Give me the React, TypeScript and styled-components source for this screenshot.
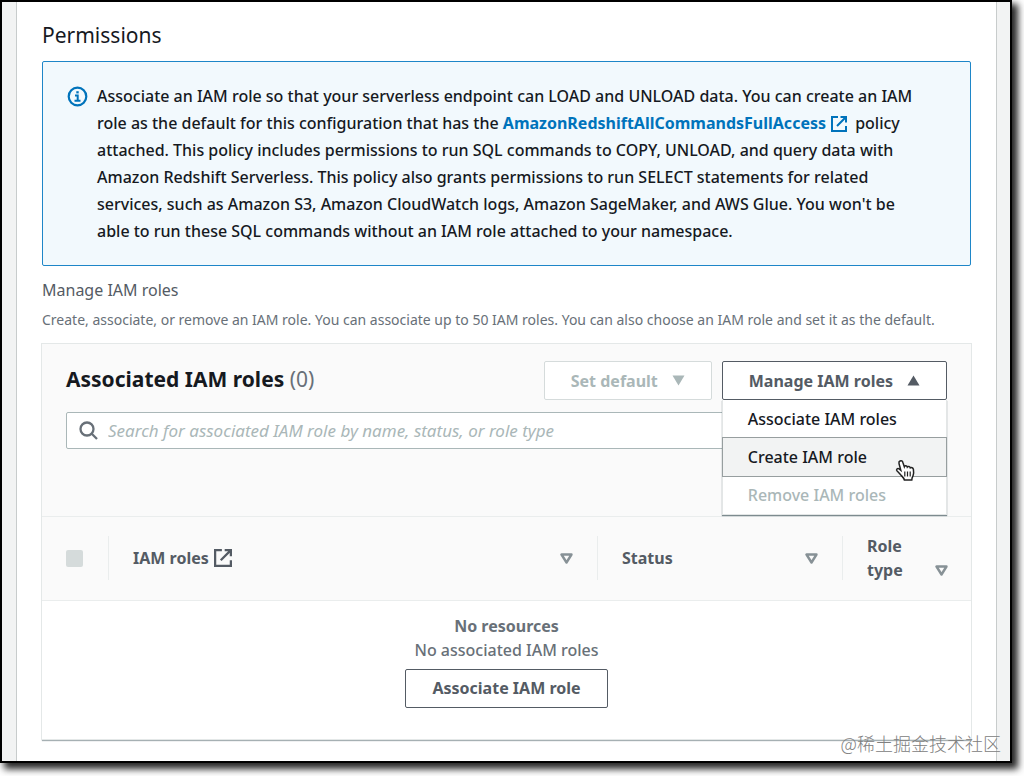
import React from "react";
import styled, { createGlobalStyle, css } from "styled-components";

const GlobalStyle = createGlobalStyle`
  *, *::before, *::after { box-sizing: border-box; }
  body {
    margin: 0;
    background: #fff;
    color: #16191f;
    font-family: "Noto Sans", "Open Sans", sans-serif;
    font-size: 16px;
    font-weight: 500;
    line-height: 24px;
  }
  button, input { font: inherit; }
  h2, h3, p { margin: 0; }
`;

const Frame = styled.div`
  position: relative;
  margin: 0 12px 13px 0;
  padding: 0 13px 0 14px;
  border: 2px solid #000;
  background: #f2f3f3;
  box-shadow: 5px 5px 7px 1px rgba(0, 0, 0, 0.85);
`;

const Panel = styled.main`
  padding: 18px 25px 22px;
  border: solid #c8cccc;
  border-width: 0 1px;
  background: #fff;
`;

const Title = styled.h2`
  margin-bottom: 11px;
  font-size: 21px;
  font-weight: 400;
  line-height: 30px;
`;

const Alert = styled.section`
  display: flex;
  gap: 9px;
  padding: 21px 42px 20px 24px;
  border: 1px solid #1e86c8;
  border-radius: 2px;
  background: #f2f9fd;
  line-height: 27px;

  > svg {
    flex: none;
    margin-top: 3px;
  }
`;

const PolicyLink = styled.a`
  color: #0073bb;
  font-weight: 700;
  text-decoration: none;

  svg {
    margin: 0 4px 0 5px;
    vertical-align: -3px;
  }
`;

const FieldLabel = styled.p`
  margin-top: 12px;
  color: #545b64;
  font-weight: 400;
`;

const FieldHint = styled.p`
  margin-top: 6px;
  color: #687078;
  font-size: 14px;
  font-weight: 400;
`;

const Card = styled.section`
  margin-top: 12px;
  box-shadow: 0 0 0 1px #e4e8e8, 0 2px 1px rgba(0, 28, 36, 0.35);
`;

const CardHeader = styled.header`
  padding: 17px 24px 67px;
  background: #fafafa;
  border-bottom: 1px solid #eaeded;
`;

const HeaderRow = styled.div`
  display: flex;
  align-items: flex-start;
  justify-content: space-between;
  margin-bottom: 12px;
`;

const CardTitle = styled.h3`
  font-size: 21px;
  font-weight: 700;
  line-height: 36px;
`;

const Count = styled.span`
  color: #687078;
  font-weight: 400;
`;

const Actions = styled.div`
  display: flex;
  gap: 10px;
`;

const Button = styled.button`
  display: inline-flex;
  align-items: center;
  justify-content: center;
  gap: 14px;
  height: 39px;
  padding: 0 26px;
  border: 1px solid #545b64;
  border-radius: 2px;
  background: #fff;
  color: #545b64;
  font-weight: 700;
  white-space: nowrap;

  &:disabled {
    border-color: #d5dbdb;
    color: #aab7b8;
  }
`;

const MenuAnchor = styled.div`
  position: relative;
`;

const Menu = styled.ul`
  position: absolute;
  top: 100%;
  left: 0;
  right: 0;
  z-index: 1;
  margin: 0;
  padding: 0;
  list-style: none;
  background: #fff;
  border: 1px solid #e3e6e6;
  border-top: 0;
  box-shadow: 0 1px 1px rgba(0, 28, 36, 0.5);
`;

const MenuItem = styled.button<{ $active?: boolean }>`
  display: block;
  width: 100%;
  height: 38px;
  padding: 0 25px;
  border: 0;
  background: none;
  color: #16191f;
  text-align: left;
  white-space: nowrap;

  &:disabled { color: #aab7b8; }

  ${(p) =>
    p.$active &&
    css`
      background: #f2f3f3;
      box-shadow: 0 0 0 1px #979e9f;
    `}
`;

const Pointer = styled.svg`
  position: absolute;
  right: 30px;
  bottom: 32px;
  z-index: 2;
`;

const Search = styled.label`
  display: flex;
  align-items: center;
  gap: 9px;
  width: 78%;
  height: 37px;
  padding: 0 11px;
  border: 1px solid #aab7b8;
  border-radius: 2px;
  background: #fff;
`;

const SearchInput = styled.input`
  flex: 1;
  min-width: 0;
  padding: 0;
  border: 0;
  outline: 0;
  background: none;

  &::placeholder {
    color: #aab7b8;
    font-size: 17px;
    font-weight: 400;
    font-style: italic;
    opacity: 1;
  }
`;

const Table = styled.table`
  width: 100%;
  border-collapse: collapse;
  table-layout: fixed;
`;

const SelectCol = styled.col` width: 67px; `;
const StatusCol = styled.col` width: 245px; `;
const TypeCol = styled.col` width: 128px; `;

const HeadCell = styled.th`
  height: 83px;
  padding: 17px 0;
  border-bottom: 1px solid #eaeded;
  background: #fafafa;
  color: #545b64;
  text-align: left;
`;

const HeadInner = styled.div<{ $last?: boolean }>`
  display: flex;
  align-items: ${(p) => (p.$last ? "flex-end" : "center")};
  justify-content: space-between;
  min-height: 44px;
  padding: 0 ${(p) => (p.$last ? 23 : 24)}px 0 24px;
  border-right: ${(p) => (p.$last ? "0" : "1px solid #eaeded")};

  > svg { margin-bottom: ${(p) => (p.$last ? 6 : 0)}px; }
`;

const HeadLink = styled.a`
  display: inline-flex;
  align-items: center;
  gap: 5px;
  color: inherit;
  text-decoration: none;
`;

const Tick = styled.input`
  appearance: none;
  width: 17px;
  height: 17px;
  margin: 0;
  border-radius: 2px;
  background: #d5dbdb;
`;

const EmptyCell = styled.td`
  padding: 13px 0 31px;
  color: #687078;
  text-align: center;

  button { margin-top: 7px; }
`;

const Watermark = styled.span`
  position: absolute;
  right: 9px;
  bottom: 4px;
  z-index: 3;
  color: #808080;
  font-family: "Noto Sans CJK SC", sans-serif;
  font-size: 18px;
  font-weight: 300;
  line-height: 28px;
`;

const External = ({ size = 17 }: { size?: number }) => (
  <svg width={size} height={size} viewBox="0 0 16 16" fill="none" stroke="currentColor" strokeWidth="2" aria-hidden="true">
    <path d="M7 1H1v14h14V10M9.500 1H15v5.500M15 1 6 10" />
  </svg>
);

const Caret = ({ up }: { up?: boolean }) => (
  <svg width="13" height="11" viewBox="0 0 13 11" fill="currentColor" aria-hidden="true">
    <path d={up ? "M6.500 0.500 12.500 10.500H0.500Z" : "M0.500 0.500H12.500L6.500 10.500Z"} />
  </svg>
);

const Sort = () => (
  <svg width="13" height="11" viewBox="0 0 13 11" fill="none" stroke="#879196" strokeWidth="2.400" strokeLinejoin="round" aria-hidden="true">
    <path d="M1.500 1.500h10l-5 8z" />
  </svg>
);

export default function App() {
  return (
    <>
      <GlobalStyle />
      <Frame>
        <Panel>
          <Title>Permissions</Title>
          <Alert>
            <svg width="21" height="21" viewBox="0 0 21 21" fill="none" stroke="#0073bb" aria-hidden="true">
              <circle cx="10.500" cy="10.500" r="8.800" strokeWidth="2.200" />
              <path d="M8 9.500h2.700v5M7.500 14.700h6" strokeWidth="2" />
              <path d="M9.300 6.300h2.400" strokeWidth="2.200" />
            </svg>
            <p>
              Associate an IAM role so that your serverless endpoint can LOAD and UNLOAD data. You can create an IAM
              role as the default for this configuration that has the{" "}
              <PolicyLink href="#policy">
                AmazonRedshiftAllCommandsFullAccess
                <External size={16} />
              </PolicyLink>{" "}
              policy attached. This policy includes permissions to run SQL commands to COPY, UNLOAD, and query data with
              Amazon Redshift Serverless. This policy also grants permissions to run SELECT statements for related
              services, such as Amazon S3, Amazon CloudWatch logs, Amazon SageMaker, and AWS Glue. You won't be able to
              run these SQL commands without an IAM role attached to your namespace.
            </p>
          </Alert>
          <FieldLabel>Manage IAM roles</FieldLabel>
          <FieldHint>
            Create, associate, or remove an IAM role. You can associate up to 50 IAM roles. You can also choose an IAM
            role and set it as the default.
          </FieldHint>
          <Card>
            <CardHeader>
              <HeaderRow>
                <CardTitle>
                  Associated IAM roles <Count>(0)</Count>
                </CardTitle>
                <Actions>
                  <Button type="button" disabled>
                    Set default <Caret />
                  </Button>
                  <MenuAnchor>
                    <Button type="button" aria-expanded="true">
                      Manage IAM roles <Caret up />
                    </Button>
                    <Menu>
                      <li>
                        <MenuItem type="button">Associate IAM roles</MenuItem>
                      </li>
                      <li>
                        <MenuItem type="button" $active>
                          Create IAM role
                        </MenuItem>
                      </li>
                      <li>
                        <MenuItem type="button" disabled>
                          Remove IAM roles
                        </MenuItem>
                      </li>
                      <Pointer width="21" height="23" viewBox="0 0 21 23" aria-hidden="true">
                        <path
                          d="M5 2c1.300-.8 2.500 0 2.900 1.500l1.400 4.200c.4-1.200 2.600-1.200 3 .3.700-.9 2.700-.7 3 .8 1-.7 2.800 0 3.100 1.500.4 2.300.3 4.200-.3 6.200-.3 1-1 1.700-1.100 3l-.2 1.500H9.400c-.3-1.700-1.300-2.700-2.500-3.900C5.200 15.400 4 13.700 2.100 12c-1.300-1.400.3-3 2-2.100l1.700 1.300L4 4.500C3.700 3.400 4 2.500 5 2Z"
                          fill="#fff"
                          stroke="#222"
                          strokeWidth="1.500"
                        />
                        <path d="M9.800 12.500v5M12.500 12.500v5M15.200 12.500v5" stroke="#222" strokeWidth="1.200" />
                      </Pointer>
                    </Menu>
                  </MenuAnchor>
                </Actions>
              </HeaderRow>
              <Search>
                <svg width="21" height="21" viewBox="0 0 21 21" fill="none" stroke="#687078" strokeWidth="2.300" aria-hidden="true">
                  <circle cx="9" cy="9" r="6.500" />
                  <path d="m13.500 13.500 5.500 5.500" />
                </svg>
                <SearchInput
                  aria-label="Search associated IAM roles"
                  placeholder="Search for associated IAM role by name, status, or role type"
                />
              </Search>
            </CardHeader>
            <Table>
              <colgroup>
                <SelectCol />
                <col />
                <StatusCol />
                <TypeCol />
              </colgroup>
              <thead>
                <tr>
                  <HeadCell>
                    <HeadInner>
                      <Tick type="checkbox" disabled aria-label="Select all roles" />
                    </HeadInner>
                  </HeadCell>
                  <HeadCell>
                    <HeadInner>
                      <HeadLink href="#roles">
                        IAM roles <External size={18} />
                      </HeadLink>
                      <Sort />
                    </HeadInner>
                  </HeadCell>
                  <HeadCell>
                    <HeadInner>
                      Status <Sort />
                    </HeadInner>
                  </HeadCell>
                  <HeadCell>
                    <HeadInner $last>
                      <span>
                        Role
                        <br />
                        type
                      </span>
                      <Sort />
                    </HeadInner>
                  </HeadCell>
                </tr>
              </thead>
              <tbody>
                <tr>
                  <EmptyCell colSpan={4}>
                    <strong>No resources</strong>
                    <p>No associated IAM roles</p>
                    <Button type="button">Associate IAM role</Button>
                  </EmptyCell>
                </tr>
              </tbody>
            </Table>
          </Card>
        </Panel>
        <Watermark>@稀土掘金技术社区</Watermark>
      </Frame>
    </>
  );
}
